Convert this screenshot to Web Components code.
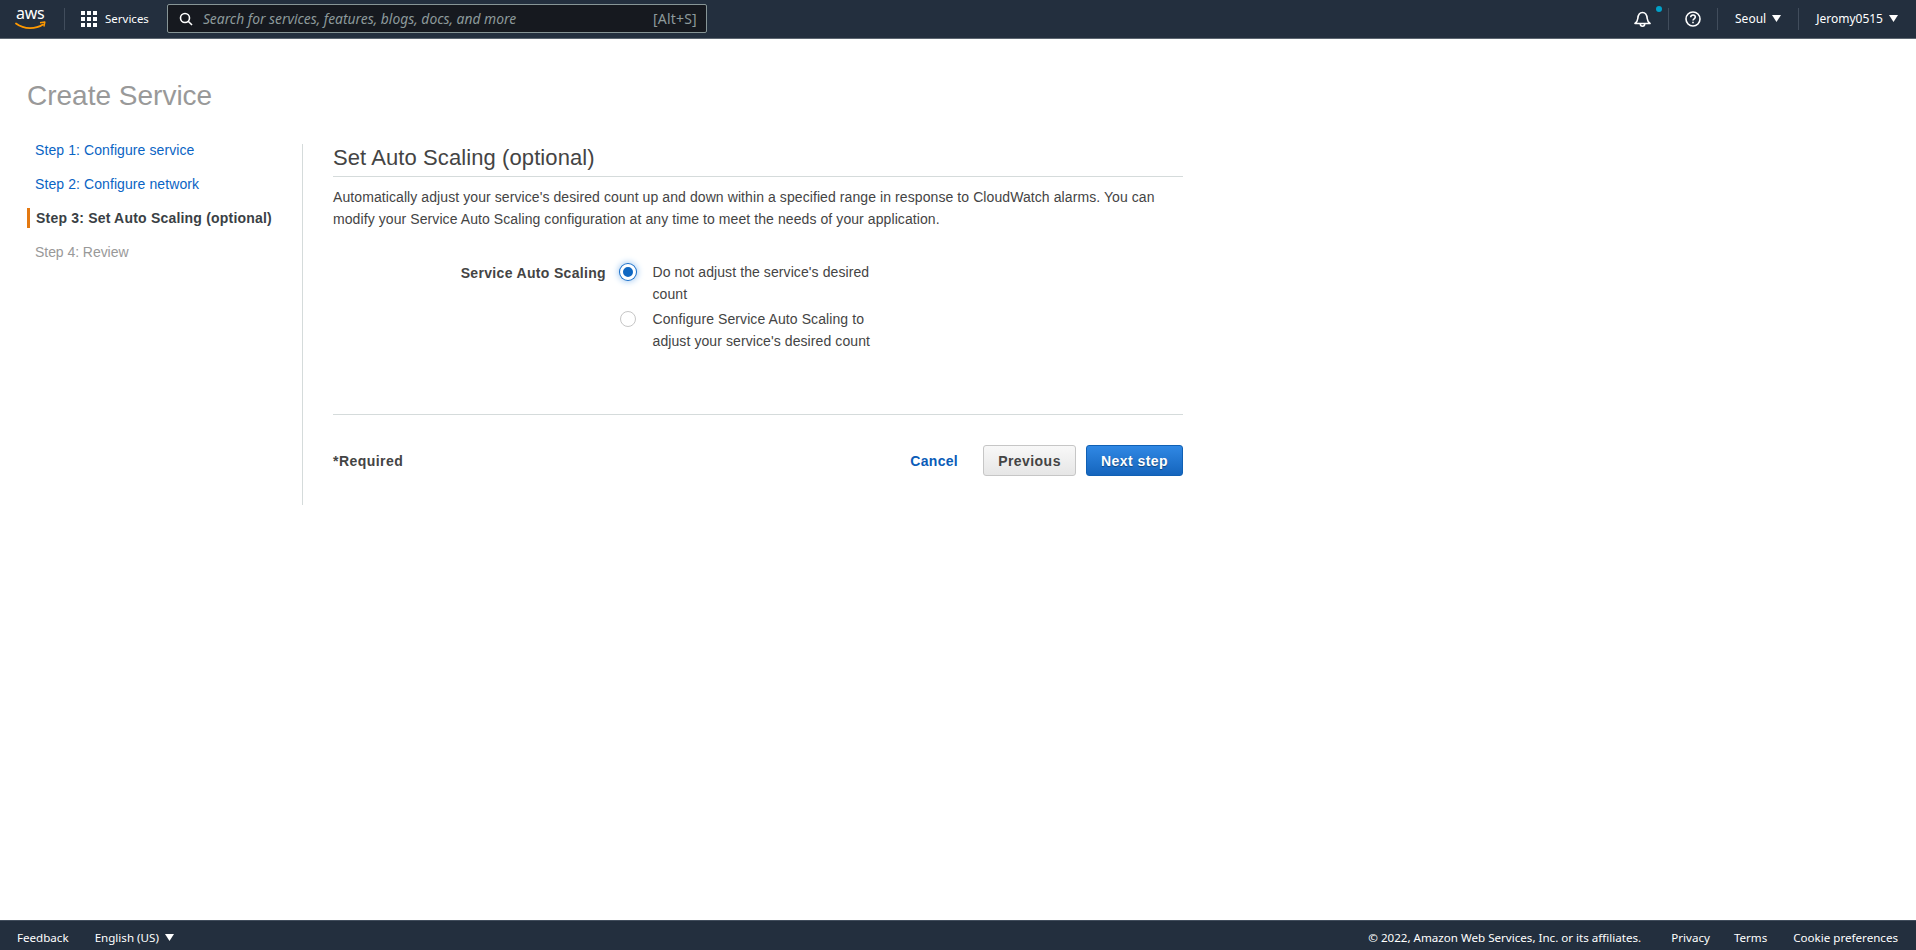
<!DOCTYPE html>
<html lang="en">
<head>
<meta charset="utf-8">
<title>Create Service</title>
<style>
    html, body { margin: 0; height: 100%; }
    body { font-family: "Liberation Sans", Arial, sans-serif; background: #fff; }
    #app { display: flex; flex-direction: column; height: 950px; overflow: hidden; }
    main { flex: 1; }
</style>
</head>
<body>
<div id="app">
    <top-nav></top-nav>
    <main>
        <wizard-page heading="Create Service">
            <step-list slot="steps"></step-list>
            <auto-scaling-form slot="body"></auto-scaling-form>
        </wizard-page>
    </main>
    <page-footer></page-footer>
</div>
<script>
const caret = `<svg width="9" height="7" viewBox="0 0 9 7"><path d="M0 0h9L4.5 7z" fill="#fff"/></svg>`;

class TopNav extends HTMLElement {
    constructor() {
        super();
        this.attachShadow({ mode: 'open' });
        this.shadowRoot.innerHTML = `
            <style>
                :host {
                    display: flex;
                    align-items: center;
                    height: 38px;
                    padding-bottom: 1px;
                    background: #232f3e;
                    color: #fff;
                    font: 12px "Noto Sans", "Open Sans", sans-serif;
                    box-shadow: 0 1px 0 #5c6670;
                    box-sizing: border-box;
                }
                .logo { position: relative; margin-left: 15px; width: 32px; height: 24px; flex: none; }
                .logo span { position: absolute; left: 1px; top: -3px; font-size: 16px; line-height: 18px; letter-spacing: -.3px; }
                .logo svg { position: absolute; left: 0; top: 0; }
                .sep { width: 1px; height: 22px; background: #414d5c; }
                .services { display: flex; align-items: center; gap: 8px; margin-left: 16px; margin-right: 18px; }
                .services span { font-size: 11.5px; }
                .search {
                    display: flex;
                    align-items: center;
                    width: 540px;
                    height: 29px;
                    box-sizing: border-box;
                    background: #16191f;
                    border: 1px solid #879596;
                    border-radius: 2px;
                    padding: 0 9px 0 11px;
                    color: #8d9a9b;
                }
                .search svg { flex: none; }
                .search em { flex: 1; margin-left: 10px; font-size: 13.85px; font-style: italic; }
                .search b { font-weight: 400; font-size: 14px; letter-spacing: .2px; }
                .right { margin-left: auto; display: flex; align-items: center; }
                .cell { display: flex; align-items: center; gap: 6px; }
                .bell { position: relative; padding: 0 17px 0 0; }
                .dot { position: absolute; top: -5px; right: 6.5px; width: 6px; height: 6px; border-radius: 50%; background: #00a1c9; }
                .help { padding: 0 16px 0 16px; }
                .seoul { padding: 0 17px 0 17px; }
                .user { padding: 0 18px 0 17px; }
            </style>
            <div class="logo">
                <span>aws</span>
                <svg width="32" height="24" viewBox="0 0 32 24">
                    <path d="M1 16.5c4 3 8.5 4.6 14 4.6 5 0 9.500-1.300 13-3.600" fill="none" stroke="#f90" stroke-width="1.800" stroke-linecap="round"/>
                    <path d="M25 15.800l4.800-.8-.9 4.500" fill="none" stroke="#f90" stroke-width="1.500" stroke-linejoin="round"/>
                </svg>
            </div>
            <div class="sep" style="margin-left:17px"></div>
            <div class="services">
                <svg width="16" height="16" viewBox="0 0 16 16" fill="#fff">
                    <rect x="0" y="0" width="4" height="4"/><rect x="6" y="0" width="4" height="4"/><rect x="12" y="0" width="4" height="4"/>
                    <rect x="0" y="6" width="4" height="4"/><rect x="6" y="6" width="4" height="4"/><rect x="12" y="6" width="4" height="4"/>
                    <rect x="0" y="12" width="4" height="4"/><rect x="6" y="12" width="4" height="4"/><rect x="12" y="12" width="4" height="4"/>
                </svg>
                <span>Services</span>
            </div>
            <div class="search">
                <svg width="14" height="14" viewBox="0 0 14 14" fill="none" stroke="#fff" stroke-width="1.600">
                    <circle cx="6" cy="6" r="4.500"/><path d="M9.200 9.200L13 13"/>
                </svg>
                <em>Search for services, features, blogs, docs, and more</em>
                <b>[Alt+S]</b>
            </div>
            <div class="right">
                <div class="cell bell">
                    <svg width="17" height="16" viewBox="0 0 17 16" fill="none" stroke="#fff" stroke-width="1.600" stroke-linejoin="round">
                        <path d="M1 12.500c1.800-1.300 2.500-2.500 2.800-5C4.100 4 5.800 1.500 8.500 1.500S12.900 4 13.200 7.500c.3 2.500 1 3.700 2.800 5z"/>
                        <path d="M6.300 12.800c0 1.500 1 2.400 2.200 2.400s2.200-.9 2.200-2.400"/>
                    </svg>
                    <span class="dot"></span>
                </div>
                <div class="sep"></div>
                <div class="cell help">
                    <svg width="16" height="16" viewBox="0 0 16 16" fill="none" stroke="#fff" stroke-width="1.600">
                        <circle cx="8" cy="8" r="7"/>
                        <path d="M5.700 6.200c0-1.400 1-2.200 2.300-2.200s2.300.8 2.300 2.100c0 1.800-2.300 1.800-2.300 3.500"/>
                        <path d="M8 10.800v1.500"/>
                    </svg>
                </div>
                <div class="sep"></div>
                <div class="cell seoul"><span>Seoul</span>${caret}</div>
                <div class="sep"></div>
                <div class="cell user"><span>Jeromy0515</span>${caret}</div>
            </div>
        `;
    }
}

class WizardPage extends HTMLElement {
    constructor() {
        super();
        this.attachShadow({ mode: 'open' });
        this.shadowRoot.innerHTML = `
            <style>
                :host { display: block; padding: 39px 27px 0; }
                h1 {
                    margin: 0 0 29px;
                    font-size: 28px;
                    line-height: 38px;
                    font-weight: 400;
                    color: #999;
                }
                .cols { display: flex; align-items: stretch; }
                .side { width: 275px; border-right: 1px solid #d5dbdb; }
                .body { width: 850px; margin-left: 30px; }
            </style>
            <h1 id="title"></h1>
            <div class="cols">
                <div class="side"><slot name="steps"></slot></div>
                <div class="body"><slot name="body"></slot></div>
            </div>
        `;
    }

    connectedCallback() {
        this.shadowRoot.getElementById('title').textContent = this.getAttribute('heading');
    }
}

class StepList extends HTMLElement {
    constructor() {
        super();
        this.attachShadow({ mode: 'open' });
        this.shadowRoot.innerHTML = `
            <style>
                :host { display: block; font-size: 14px; letter-spacing: .09px; }
                ul { list-style: none; margin: -11px 0 0; padding: 0; }
                li { height: 34px; line-height: 34px; padding-left: 8px; color: #0a64c4; }
                li.current {
                    position: relative;
                    padding-left: 9px;
                    font-weight: 700;
                    color: #3a3f45;
                    letter-spacing: .2px;
                }
                li.current::before {
                    content: "";
                    position: absolute;
                    left: 0;
                    top: 7px;
                    width: 3px;
                    height: 20px;
                    background: #e47911;
                }
                li.off { color: #999; letter-spacing: -.05px; }
            </style>
            <ul>
                <li>Step 1: Configure service</li>
                <li>Step 2: Configure network</li>
                <li class="current">Step 3: Set Auto Scaling (optional)</li>
                <li class="off">Step 4: Review</li>
            </ul>
        `;
    }
}

class RadioOption extends HTMLElement {
    constructor() {
        super();
        this.attachShadow({ mode: 'open' });
        this.shadowRoot.innerHTML = `
            <style>
                :host { display: flex; align-items: flex-start; gap: 16.5px; color: #444; font-size: 14px; line-height: 21.5px; letter-spacing: .09px; }
                .dot {
                    flex: none;
                    width: 16px;
                    height: 16px;
                    box-sizing: border-box;
                    border-radius: 50%;
                    border: 1px solid #c6c6c6;
                    background: #fff;
                }
                :host([checked]) .dot {
                    border: 3px solid #fff;
                    background: #0f67c2;
                    box-shadow: 0 0 0 1px #1b6fc9, 0 0 6px 2px #a9cdf2;
                }
                .label { width: 240px; margin-top: -2px; }
            </style>
            <span class="dot"></span>
            <span class="label"><slot></slot></span>
        `;
    }
}

class AutoScalingForm extends HTMLElement {
    constructor() {
        super();
        this.attachShadow({ mode: 'open' });
        this.shadowRoot.innerHTML = `
            <style>
                :host { display: block; color: #444; font-size: 14px; }
                h2 {
                    margin: 0;
                    padding-bottom: 4px;
                    font-size: 22px;
                    line-height: 28px;
                    font-weight: 400;
                    letter-spacing: .09px;
                    color: #444;
                    border-bottom: 1px solid #d5dbdb;
                }
                p { margin: 9px 0 0; line-height: 22px; letter-spacing: .085px; }
                .field { display: flex; margin-top: 34px; padding-bottom: 62px; border-bottom: 1px solid #d5dbdb; }
                .name {
                    width: 273px;
                    text-align: right;
                    font-weight: 700;
                    letter-spacing: .33px;
                    line-height: 18px;
                    color: #444;
                }
                .opts { margin-left: 14px; display: flex; flex-direction: column; gap: 6px; }
                .foot { display: flex; align-items: center; height: 31px; padding: 30px 0 29px; }
                .req { font-weight: 700; letter-spacing: .45px; }
                .cancel { margin-left: auto; margin-right: 25px; font-weight: 700; color: #0a5cb8; letter-spacing: .3px; }
                .btn {
                    box-sizing: border-box;
                    height: 31px;
                    border-radius: 3px;
                    display: flex;
                    align-items: center;
                    justify-content: center;
                    font-weight: 700;
                    letter-spacing: .45px;
                }
                .prev {
                    width: 93px;
                    margin-right: 10px;
                    color: #444;
                    border: 1px solid #c6c6c6;
                    background: linear-gradient(#f8f8f8, #e6e6e6);
                }
                .next {
                    width: 97px;
                    color: #fff;
                    border: 1px solid #1060b4;
                    background: linear-gradient(#3088e4, #1565bd);
                    text-shadow: 0 1px 1px rgba(0,0,0,.4);
                }
            </style>
            <h2>Set Auto Scaling (optional)</h2>
            <p>Automatically adjust your service's desired count up and down within a specified range in response to CloudWatch alarms. You can modify your Service Auto Scaling configuration at any time to meet the needs of your application.</p>
            <div class="field">
                <div class="name">Service Auto Scaling</div>
                <div class="opts">
                    <radio-option checked>Do not adjust the service's desired count</radio-option>
                    <radio-option>Configure Service Auto Scaling to adjust your service's desired count</radio-option>
                </div>
            </div>
            <div class="foot">
                <span class="req">*Required</span>
                <span class="cancel">Cancel</span>
                <span class="btn prev">Previous</span>
                <span class="btn next">Next step</span>
            </div>
        `;
    }
}

class PageFooter extends HTMLElement {
    constructor() {
        super();
        this.attachShadow({ mode: 'open' });
        this.shadowRoot.innerHTML = `
            <style>
                :host {
                    display: flex;
                    align-items: center;
                    height: 30px;
                    box-sizing: border-box;
                    padding: 3px 18px 0 17px;
                    background: #232f3e;
                    border-top: 1px solid #414d5c;
                    color: #fff;
                    font: 11.6px "Noto Sans", "Open Sans", sans-serif;
                }
                .lang { display: flex; align-items: center; gap: 6px; margin-left: 26px; }
                .right { margin-left: auto; display: flex; }
                .privacy { margin-left: 30px; }
                .terms { margin-left: 24px; }
                .cookie { margin-left: 26px; }
            </style>
            <span>Feedback</span>
            <span class="lang">English (US) ${caret}</span>
            <div class="right">
                <span>© 2022, Amazon Web Services, Inc. or its affiliates.</span>
                <span class="privacy">Privacy</span>
                <span class="terms">Terms</span>
                <span class="cookie">Cookie preferences</span>
            </div>
        `;
    }
}

customElements.define('top-nav', TopNav);
customElements.define('wizard-page', WizardPage);
customElements.define('step-list', StepList);
customElements.define('radio-option', RadioOption);
customElements.define('auto-scaling-form', AutoScalingForm);
customElements.define('page-footer', PageFooter);
</script>
</body>
</html>
